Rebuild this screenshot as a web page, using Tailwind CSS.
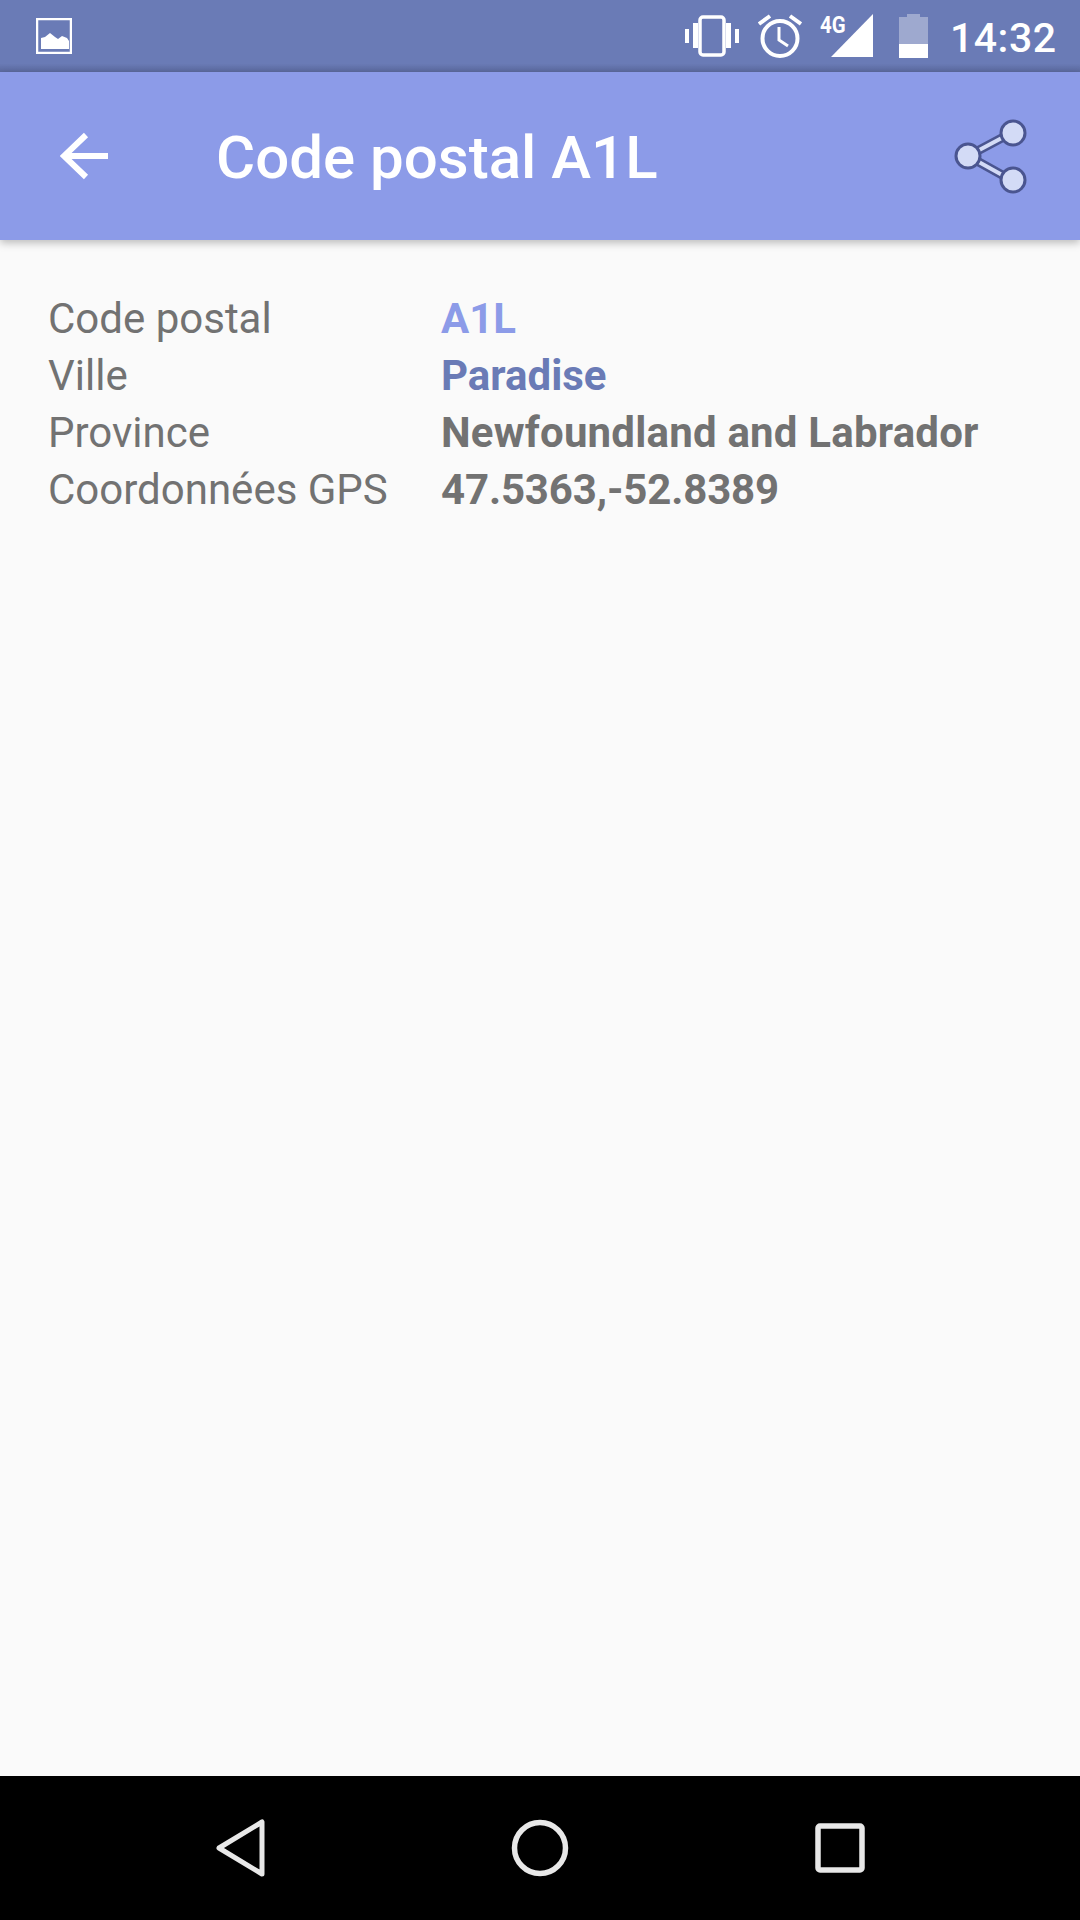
<!DOCTYPE html>
<html lang="fr">
<head>
    <meta charset="UTF-8">
    <title>Code postal A1L</title>
    <script src="https://cdn.jsdelivr.net/npm/@tailwindcss/browser@4"></script>
</head>
<body class="w-[1080px] h-[1920px] overflow-hidden bg-[#fafafa] flex flex-col font-['Roboto',sans-serif]">
    <!-- Status bar -->
    <div class="h-[72px] shrink-0 bg-linear-to-b from-[#6a7bb6] from-[88%] to-[#5c6a9f] flex items-center pl-[36px] relative">
        <svg class="w-[36px] h-[36px]" viewBox="0 0 36 36">
            <rect x="1" y="1" width="34" height="34" fill="none" stroke="#fff" stroke-width="2.5"/>
            <path d="M5 31V20l4-1 5-4 5 4 3 2 4-3 5 2 2 3v8z" fill="#fff"/>
        </svg>
        <svg class="w-[54px] h-[42px] ml-[613px]" viewBox="0 0 54 42">
            <rect x="0" y="14" width="4" height="14" fill="#fff"/>
            <rect x="8" y="8" width="5" height="25" fill="#fff"/>
            <rect x="15" y="2" width="24" height="38" rx="3" fill="none" stroke="#fff" stroke-width="3.5"/>
            <rect x="41" y="8" width="5" height="25" fill="#fff"/>
            <rect x="50" y="14" width="4" height="14" fill="#fff"/>
        </svg>
        <svg class="w-[44px] h-[44px] ml-[19px]" viewBox="0 0 44 44">
            <circle cx="22" cy="24.5" r="17.5" fill="none" stroke="#fff" stroke-width="4"/>
            <path d="M21 13v13l9 6" fill="none" stroke="#fff" stroke-width="3"/>
            <path d="M12 2 1 10M32 2l11 8" fill="none" stroke="#fff" stroke-width="4"/>
        </svg>
        <div class="relative w-[54px] h-[44px] ml-[18px]">
            <svg class="absolute left-[11px] top-0 w-[43px] h-[44px]" viewBox="0 0 43 44">
                <path d="M0 43 42 0v43z" fill="#fff"/>
            </svg>
            <span class="absolute left-0 top-[-1px] text-[24px] leading-[24px] font-bold text-white scale-x-[0.85] origin-left">4G</span>
        </div>
        <div class="w-[29px] h-[44px] ml-[25px] flex flex-col">
            <div class="h-[3px] mx-[8px] bg-white/35"></div>
            <div class="h-[27px] bg-white/35"></div>
            <div class="h-[14px] bg-white"></div>
        </div>
        <span class="ml-[22px] mt-[3px] text-[41px] leading-[72px] font-medium text-white tracking-[0.5px]">14:32</span>
    </div>

    <!-- App bar -->
    <header class="h-[168px] shrink-0 bg-[#8c9be8] flex items-center pl-[60px] shadow-[0_3px_8px_rgba(0,0,0,0.25)] relative">
        <svg class="w-[50px] h-[50px]" viewBox="0 0 50 50">
            <path d="M48 25H4M26 4 4 25l22 21" fill="none" stroke="#fff" stroke-width="6"/>
        </svg>
        <h1 class="ml-[106px] mt-[4px] text-[60px] leading-[72px] font-medium text-white">Code postal A1L</h1>
        <svg class="w-[74px] h-[76px] ml-auto mr-[52px]" viewBox="0 0 74 76">
            <path d="M14 38 59 14M14 38l45 25" fill="none" stroke="#4a5590" stroke-width="9"/>
            <path d="M14 38 59 14M14 38l45 25" fill="none" stroke="#d3dbf6" stroke-width="4"/>
            <circle cx="14" cy="38" r="12" fill="#d3dbf6" stroke="#4a5590" stroke-width="3"/>
            <circle cx="59" cy="15" r="12" fill="#d3dbf6" stroke="#4a5590" stroke-width="3"/>
            <circle cx="59" cy="62" r="12" fill="#d3dbf6" stroke="#4a5590" stroke-width="3"/>
        </svg>
    </header>

    <!-- Details -->
    <main class="flex-1 pt-[50px] pl-[48px] grid grid-cols-[393px_1fr] auto-rows-[57px] content-start text-[42px] leading-[57px] text-[#727272]">
        <div>Code postal</div>
        <div class="font-bold text-[#8c9be8]">A1L</div>
        <div>Ville</div>
        <div class="font-bold text-[#6a7bb6]">Paradise</div>
        <div>Province</div>
        <div class="font-bold tracking-[0.2px]">Newfoundland and Labrador</div>
        <div>Coordonnées GPS</div>
        <div class="font-bold tracking-[-0.15px]">47.5363,-52.8389</div>
    </main>

    <!-- Navigation bar -->
    <nav class="h-[144px] shrink-0 bg-black flex items-center">
        <svg class="w-[50px] h-[58px] ml-[216px]" viewBox="0 0 50 58">
            <path d="M46 3v52L3 29z" fill="none" stroke="#e8e8e8" stroke-width="5" stroke-linejoin="round"/>
        </svg>
        <svg class="w-[58px] h-[58px] ml-[245px]" viewBox="0 0 58 58">
            <circle cx="29" cy="29" r="25.5" fill="none" stroke="#e8e8e8" stroke-width="5.5"/>
        </svg>
        <svg class="w-[50px] h-[50px] ml-[246px]" viewBox="0 0 50 50">
            <rect x="3" y="3" width="44" height="44" rx="2" fill="none" stroke="#e8e8e8" stroke-width="5.5"/>
        </svg>
    </nav>
</body>
</html>
